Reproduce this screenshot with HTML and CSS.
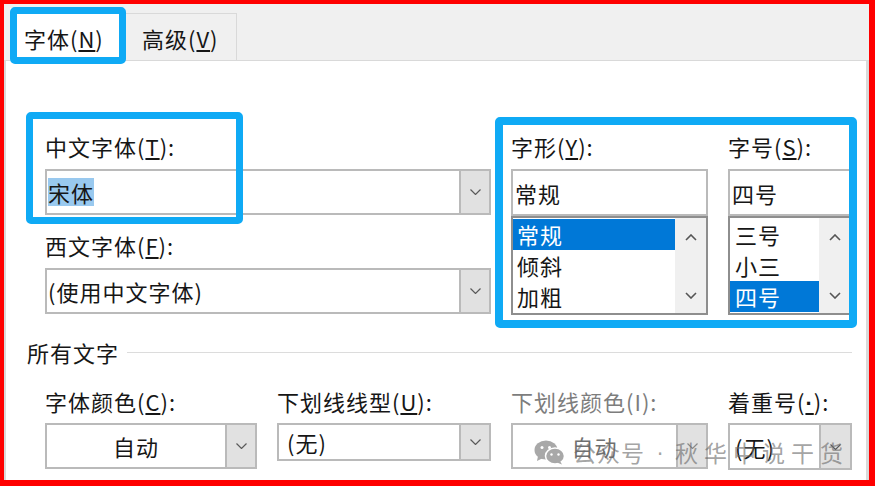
FILE: index.html
```html
<!DOCTYPE html>
<html lang="zh-CN">
<head>
<meta charset="utf-8">
<title>字体</title>
<link rel="stylesheet" href="styles.css">
</head>
<body>
<div class="frame">
  <div class="tabbar">
    <div class="tab active">字体(<u>N</u>)</div>
    <div class="tab second">高级(<u>V</u>)</div>
  </div>
  <div class="panel">
    <div class="top">
      <div class="col-main">
        <div class="lbl">中文字体(<u>T</u>):</div>
        <div class="combo">
          <div class="val"><span class="sel">宋体</span></div>
          <div class="btn"><svg width="11" height="6" viewBox="0 0 11 6"><path d="M0.5 0.5 L5.5 5.5 L10.5 0.5" fill="none" stroke="#5a5a5a" stroke-width="1.2"/></svg></div>
        </div>
        <div class="lbl mt">西文字体(<u>F</u>):</div>
        <div class="combo">
          <div class="val">(使用中文字体)</div>
          <div class="btn"><svg width="11" height="6" viewBox="0 0 11 6"><path d="M0.5 0.5 L5.5 5.5 L10.5 0.5" fill="none" stroke="#5a5a5a" stroke-width="1.2"/></svg></div>
        </div>
      </div>
      <div class="col-style">
        <div class="lbl">字形(<u>Y</u>):</div>
        <div class="tbox">常规</div>
        <div class="list">
          <div class="items">
            <div class="item on">常规</div>
            <div class="item">倾斜</div>
            <div class="item">加粗</div>
          </div>
          <div class="sbar">
            <svg width="12" height="7" viewBox="0 0 12 7"><path d="M1 6 L6 1 L11 6" fill="none" stroke="#555" stroke-width="1.6"/></svg>
            <svg width="12" height="7" viewBox="0 0 12 7"><path d="M1 1 L6 6 L11 1" fill="none" stroke="#555" stroke-width="1.6"/></svg>
          </div>
        </div>
      </div>
      <div class="col-size">
        <div class="lbl">字号(<u>S</u>):</div>
        <div class="tbox">四号</div>
        <div class="list">
          <div class="items size">
            <div class="item">三号</div>
            <div class="item">小三</div>
            <div class="item on">四号</div>
          </div>
          <div class="sbar">
            <svg width="12" height="7" viewBox="0 0 12 7"><path d="M1 6 L6 1 L11 6" fill="none" stroke="#555" stroke-width="1.6"/></svg>
            <svg width="12" height="7" viewBox="0 0 12 7"><path d="M1 1 L6 6 L11 1" fill="none" stroke="#555" stroke-width="1.6"/></svg>
          </div>
        </div>
      </div>
    </div>

    <div class="group"><span>所有文字</span><div class="rule"></div></div>

    <div class="row">
      <div class="field">
        <div class="lbl">字体颜色(<u>C</u>):</div>
        <div class="combo">
          <div class="val center">自动</div>
          <div class="btn"><svg width="11" height="6" viewBox="0 0 11 6"><path d="M0.5 0.5 L5.5 5.5 L10.5 0.5" fill="none" stroke="#5a5a5a" stroke-width="1.2"/></svg></div>
        </div>
      </div>
      <div class="field">
        <div class="lbl">下划线线型(<u>U</u>):</div>
        <div class="combo short">
          <div class="val pad8">(无)</div>
          <div class="btn"><svg width="11" height="6" viewBox="0 0 11 6"><path d="M0.5 0.5 L5.5 5.5 L10.5 0.5" fill="none" stroke="#5a5a5a" stroke-width="1.2"/></svg></div>
        </div>
      </div>
      <div class="field">
        <div class="lbl off">下划线颜色(I):</div>
        <div class="combo">
          <div class="val center off2">自动</div>
          <div class="btn"><svg width="11" height="6" viewBox="0 0 11 6"><path d="M0.5 0.5 L5.5 5.5 L10.5 0.5" fill="none" stroke="#8a8a8a" stroke-width="1.2"/></svg></div>
        </div>
      </div>
      <div class="field">
        <div class="lbl">着重号(<u class="latin">·</u>):</div>
        <div class="combo tall">
          <div class="val pad5">(无)</div>
          <div class="btn w33"><svg width="11" height="6" viewBox="0 0 11 6"><path d="M0.5 0.5 L5.5 5.5 L10.5 0.5" fill="none" stroke="#5a5a5a" stroke-width="1.2"/></svg></div>
        </div>
      </div>
    </div>
  </div>

  <div class="mark mark-tab"></div>
  <div class="mark mark-cn"></div>
  <div class="mark mark-style"></div>

  <div class="wm">
    <svg class="wx" width="31" height="25" viewBox="0 0 31 25">
      <ellipse cx="12" cy="10" rx="11.5" ry="9.5" fill="#8c8c8c"/>
      <path d="M4 16 L3 21 L9 18 Z" fill="#8c8c8c"/>
      <ellipse cx="21" cy="16" rx="9.5" ry="8" fill="#8c8c8c" stroke="#fff" stroke-width="1.5"/>
      <path d="M26 21 L28 24.5 L23 22.5 Z" fill="#8c8c8c"/>
      <circle cx="8" cy="7.5" r="1.5" fill="#fff"/>
      <circle cx="15.5" cy="7.5" r="1.5" fill="#fff"/>
      <circle cx="17.5" cy="14.5" r="1.2" fill="#fff"/>
      <circle cx="24.5" cy="14.5" r="1.2" fill="#fff"/>
    </svg>
    <span class="wm1">公众号</span><span class="wmdot latin">·</span><span class="wm2">秋华中说干货</span>
  </div>
</div>
</body>
</html>
```

FILE: styles.css
```css
body {
  margin: 0;
  font-family: "Noto Sans CJK SC", "Microsoft YaHei", sans-serif;
  font-size: 22px;
  letter-spacing: 1px;
  color: #161616;
  background: #fff;
}

.latin {
  font-family: "Liberation Sans", "DejaVu Sans", sans-serif;
  font-weight: bold;
}

.frame {
  position: relative;
  width: 875px;
  height: 486px;
  box-sizing: border-box;
  border-style: solid;
  border-color: #ff0000;
  border-width: 4px 6px 6px 4px;
  background: #e4e4e4;
  display: flex;
  flex-direction: column;
  overflow: hidden;
}

/* tabs */
.tabbar {
  flex: none;
  height: 57px;
  box-sizing: border-box;
  background: #f0f0f0;
  border-bottom: 1px solid #d9d9d9;
  display: flex;
  align-items: flex-end;
  padding-left: 6px;
}
.tab {
  box-sizing: border-box;
  line-height: 24px;
  white-space: nowrap;
}
.tab.active {
  width: 115px;
  height: 53px;
  background: #fff;
  padding: 18px 0 0 14px;
  margin-bottom: -1px;
}
.tab.second {
  width: 112px;
  height: 47px;
  border: 1px solid #d9d9d9;
  border-bottom: none;
  padding: 12px 0 0 16px;
  background: #f0f0f0;
}

/* panel */
.panel {
  flex: 1;
  background: #fff;
  border-left: 2px solid #dadada;
  border-right: 3px solid #dadada;
  padding: 73px 14px 0 21px;
}

.top {
  display: flex;
  gap: 20px;
  margin-left: 18px;
  align-items: flex-start;
}
.col-main { width: 446px; }
.col-style { width: 197px; }
.col-size { width: 124px; }

.lbl {
  height: 24px;
  line-height: 24px;
  margin-bottom: 11px;
  white-space: nowrap;
}
.lbl.mt { margin-top: 18px; }
.lbl.off { color: #7d7d7d; }

.combo {
  display: flex;
  box-sizing: border-box;
  height: 46px;
  border: 2px solid #bababa;
  background: #fff;
}
.combo.short { height: 38px; }
.combo.tall { height: 47px; }
.combo .val {
  flex: 1;
  display: flex;
  align-items: center;
  padding-left: 1px;
  white-space: nowrap;
  overflow: hidden;
}
.combo .val.center { justify-content: center; padding-left: 0; }
.combo .val.pad8 { padding-left: 8px; }
.combo .val.pad5 { padding-left: 5px; }
.combo .val.off2 { color: #707070; }
.combo .btn {
  flex: none;
  width: 32px;
  box-sizing: border-box;
  margin: -2px -2px -2px 0;
  border: 2px solid #bababa;
  background: #e1e1e1;
  display: flex;
  align-items: center;
  justify-content: center;
}
.combo .btn.w33 { width: 33px; }

.sel {
  background: #99c9ef;
  line-height: 28px;
}

.tbox {
  box-sizing: border-box;
  height: 47px;
  border: 2px solid #bababa;
  display: flex;
  align-items: center;
  padding-left: 2px;
  white-space: nowrap;
}
.list {
  box-sizing: border-box;
  height: 99px;
  border: 2px solid #8e8e8e;
  display: flex;
}
.items {
  flex: 1;
  padding-top: 1px;
}
.item {
  height: 31px;
  line-height: 31px;
  padding-left: 4px;
  white-space: nowrap;
}
.items.size .item { padding-left: 5px; }
.item.on {
  background: #0078d7;
  color: #fff;
}
.sbar {
  flex: none;
  width: 31px;
  background: #f0f0f0;
  display: flex;
  flex-direction: column;
  justify-content: space-between;
  align-items: center;
  padding: 16px 0 14px;
  box-sizing: border-box;
}

/* group */
.group {
  display: flex;
  align-items: center;
  height: 24px;
  line-height: 24px;
  margin-top: 25px;
}
.rule {
  flex: 1;
  height: 1px;
  background: #dcdcdc;
  margin-left: 8px;
}

.row {
  display: grid;
  grid-template-columns: 212px 214px 197px 124px;
  column-gap: 20px;
  margin-left: 18px;
  margin-top: 25px;
  align-items: start;
}
.row .lbl { margin-bottom: 10px; }

/* annotation boxes */
.mark {
  position: absolute;
  box-sizing: border-box;
  border: 7px solid #0faaf5;
  border-radius: 5px;
  pointer-events: none;
}
.mark-tab { left: 6px; top: 3px; width: 116px; height: 57px; }
.mark-cn { left: 22px; top: 108px; width: 217px; height: 112px; }
.mark-style { left: 491px; top: 113px; width: 362px; height: 211px; border-width: 8px; }

/* watermark */
.wm {
  position: absolute;
  left: 530px;
  top: 432px;
  height: 32px;
  display: flex;
  align-items: center;
  color: rgba(105, 105, 105, 0.62);
  font-size: 23px;
  letter-spacing: 1px;
  white-space: nowrap;
}
.wx { opacity: 0.75; margin-right: 8px; }
.wmdot { width: 30px; text-align: center; letter-spacing: 0; font-weight: normal; }
.wm2 { letter-spacing: 6px; }
```
